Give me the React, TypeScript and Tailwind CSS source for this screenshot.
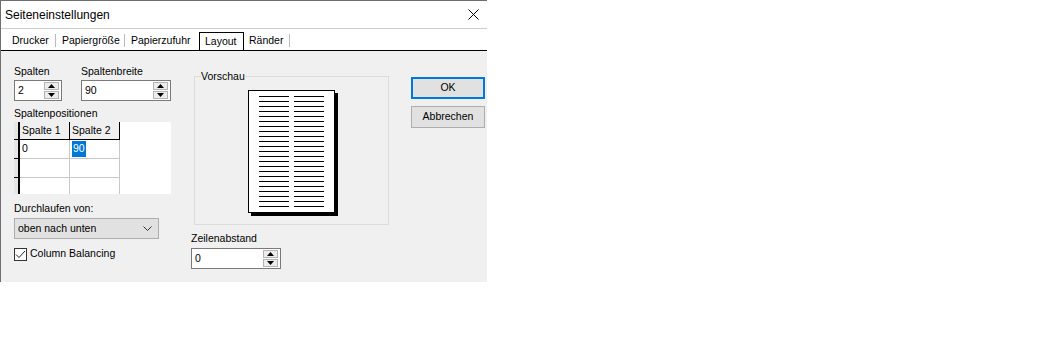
import React from 'react'

const lines = Array.from({ length: 23 }, (_, i) => i)

function Arrows() {
  return (
    <div className="flex flex-col gap-[1px]">
      <div className="flex h-[8px] w-[15px] items-center justify-center border border-[#b4b4b4] bg-[#ececec]">
        <svg width="7" height="4" viewBox="0 0 7 4">
          <path d="M0 4 L3.5 0 L7 4 Z" fill="#000" />
        </svg>
      </div>
      <div className="flex h-[8px] w-[15px] items-center justify-center border border-[#b4b4b4] bg-[#ececec]">
        <svg width="7" height="4" viewBox="0 0 7 4">
          <path d="M0 0 L3.5 4 L7 0 Z" fill="#000" />
        </svg>
      </div>
    </div>
  )
}

function SpinBox({ value, width }: { value: string; width: string }) {
  return (
    <div className={`flex h-[21px] items-center justify-between border border-[#7a7a7a] bg-white pl-[3px] pr-[2px] ${width}`}>
      <span>{value}</span>
      <Arrows />
    </div>
  )
}

function Field({ label, children }: { label: string; children: React.ReactNode }) {
  return (
    <div className="flex flex-col">
      <span className="h-[14px] leading-[14px]">{label}</span>
      <div className="mt-[2px]">{children}</div>
    </div>
  )
}

export default function App() {
  return (
    <div className="h-[359px] w-[1050px] bg-white font-['Liberation_Sans',Arial,sans-serif] text-[10.5px] text-black">
      <div className="flex h-[282px] w-[487px] flex-col border-l border-t border-[#6e6e6e]">
        {/* title bar */}
        <div className="flex h-[28px] items-center justify-between border-b border-[#cdcdcd] bg-white pl-[4px] pr-[4px]">
          <span className="text-[12px]">Seiteneinstellungen</span>
          <svg width="11" height="11" viewBox="0 0 11 11" className="mr-[4px]">
            <path d="M0.5 0.5 L10.5 10.5 M10.5 0.5 L0.5 10.5" stroke="#000" strokeWidth="1" />
          </svg>
        </div>

        {/* tabs */}
        <div className="flex h-[22px] items-end border-b border-black bg-white pl-[5px]">
          <div className="flex h-[18px] w-[49px] items-center pl-[6px]">Drucker</div>
          <div className="mb-[3px] h-[13px] w-px bg-[#b9b9b9]" />
          <div className="flex h-[18px] w-[68px] items-center pl-[6px]">Papiergröße</div>
          <div className="mb-[3px] h-[13px] w-px bg-[#b9b9b9]" />
          <div className="flex h-[18px] w-[74px] items-center pl-[6px]">Papierzufuhr</div>
          <div className="flex h-[18px] w-[45px] items-center border-x border-t border-black pl-[5px]">Layout</div>
          <div className="flex h-[18px] w-[45px] items-center pl-[5px]">Ränder</div>
          <div className="mb-[3px] h-[13px] w-px bg-[#b9b9b9]" />
        </div>

        {/* body */}
        <div className="flex flex-1 bg-[#f0f0f0] pl-[13px]">
          {/* left column */}
          <div className="flex w-[157px] flex-col pt-[13px]">
            <div className="flex gap-[19px]">
              <Field label="Spalten">
                <SpinBox value="2" width="w-[48px]" />
              </Field>
              <Field label="Spaltenbreite">
                <SpinBox value="90" width="w-[90px]" />
              </Field>
            </div>

            <span className="mt-[5px] h-[14px] leading-[14px]">Spaltenpositionen</span>
            <div className="mt-[2px] flex h-[72px] w-[157px] bg-white">
              <div className="flex w-[6px] flex-col border-r-2 border-black">
                <div className="h-[18px] border-b border-black bg-[#e6e6e6]" />
                <div className="h-[19px] border-b border-black bg-[#e6e6e6]" />
                <div className="h-[19px] border-b border-black bg-[#e6e6e6]" />
                <div className="h-[16px] bg-[#e6e6e6]" />
              </div>
              <div className="flex flex-col">
                <div className="flex h-[18px] border-b border-black bg-[#f0f0f0]">
                  <div className="flex w-[50px] items-center border-r border-black pl-[2px]">Spalte 1</div>
                  <div className="flex w-[50px] items-center border-r border-black pl-[2px]">Spalte 2</div>
                </div>
                <div className="flex h-[19px] border-b border-[#c8c8c8]">
                  <div className="flex w-[50px] items-center border-r border-[#c8c8c8] pl-[2px]">0</div>
                  <div className="flex w-[50px] items-center border-r border-[#c8c8c8] pl-[2px]">
                    <span className="bg-[#0078d7] px-px text-white">90</span>
                  </div>
                </div>
                <div className="flex h-[19px] border-b border-[#c8c8c8]">
                  <div className="w-[50px] border-r border-[#c8c8c8]" />
                  <div className="w-[50px] border-r border-[#c8c8c8]" />
                </div>
                <div className="flex h-[16px]">
                  <div className="w-[50px] border-r border-[#c8c8c8]" />
                  <div className="w-[50px] border-r border-[#c8c8c8]" />
                </div>
              </div>
            </div>

            <span className="mt-[7px] h-[14px] leading-[14px]">Durchlaufen von:</span>
            <div className="mt-[3px] flex h-[21px] w-[145px] items-center justify-between border border-[#adadad] bg-[#e1e1e1] pl-[3px] pr-[6px]">
              <span>oben nach unten</span>
              <svg width="9" height="5" viewBox="0 0 9 5">
                <path d="M0.5 0.5 L4.5 4.5 L8.5 0.5" fill="none" stroke="#333" strokeWidth="1" />
              </svg>
            </div>

            <div className="mt-[8px] flex h-[14px] items-center gap-[3px]">
              <div className="flex h-[13px] w-[13px] items-center justify-center border border-[#333] bg-white">
                <svg width="11" height="9" viewBox="0 0 11 9">
                  <path d="M1 4.5 L4 7.5 L10 1" fill="none" stroke="#222" strokeWidth="1" />
                </svg>
              </div>
              <span>Column Balancing</span>
            </div>
          </div>

          {/* middle column */}
          <div className="ml-[20px] flex w-[198px] flex-col pt-[18px]">
            <fieldset className="ml-[3px] h-[156px] w-[195px] border border-[#dcdcdc] pl-[6px]">
              <legend className="h-[14px] leading-[14px]">Vorschau</legend>
              <div className="mt-[7px] flex justify-center pr-[6px]">
                <div className="flex h-[123px] w-[87px] justify-between border border-black bg-white px-[10px] pt-[5px] shadow-[3px_3px_0_0_#000]">
                  <div className="flex w-[30px] flex-col gap-[4px]">
                    {lines.map((i) => (
                      <div key={i} className="h-px bg-black" />
                    ))}
                  </div>
                  <div className="flex w-[30px] flex-col gap-[4px]">
                    {lines.map((i) => (
                      <div key={i} className="h-px bg-black" />
                    ))}
                  </div>
                </div>
              </div>
            </fieldset>
            <div className="mt-[6px]">
              <span className="block h-[14px] leading-[14px]">Zeilenabstand</span>
              <div className="mt-[3px]">
                <SpinBox value="0" width="w-[90px]" />
              </div>
            </div>
          </div>

          {/* buttons */}
          <div className="ml-[22px] flex flex-col gap-[7px] pt-[26px]">
            <div className="flex h-[22px] w-[74px] items-center justify-center border-2 border-[#0078d7] bg-[#e1e1e1]">OK</div>
            <div className="flex h-[22px] w-[74px] items-center justify-center border border-[#adadad] bg-[#e1e1e1]">Abbrechen</div>
          </div>
        </div>
      </div>
    </div>
  )
}
